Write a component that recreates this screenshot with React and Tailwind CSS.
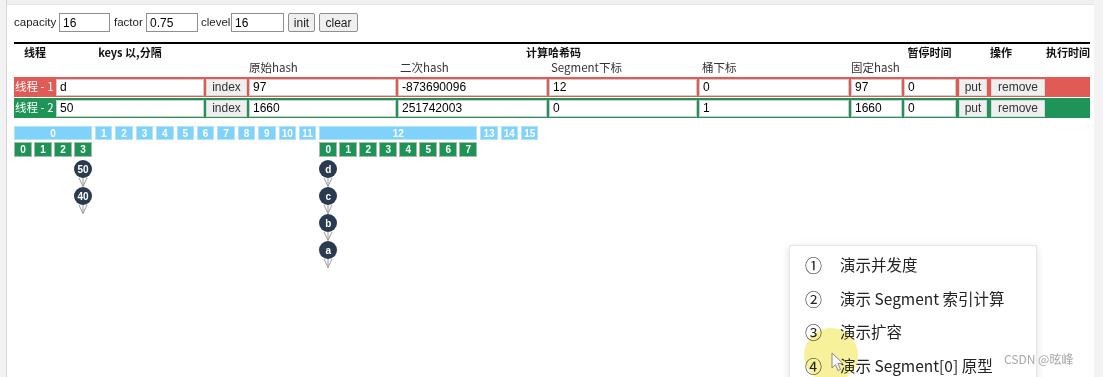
import React from "react";

const ui = { fontFamily: '"Liberation Sans", "Noto Sans CJK SC", sans-serif' };
const cjk = { fontFamily: '"Noto Sans CJK SC", "Liberation Sans", sans-serif' };

const rows = [
  { name: "线程 - 1", bg: "bg-[#e05b56]", keys: "d", h1: "97", h2: "-873690096", seg: "12", bucket: "0", fixed: "97", pause: "0" },
  { name: "线程 - 2", bg: "bg-[#1f9458]", keys: "50", h1: "1660", h2: "251742003", seg: "0", bucket: "1", fixed: "1660", pause: "0" },
];

// segment index -> bucket count and chains hanging under buckets
const segments = [
  { id: 0, buckets: 4, chains: { 3: ["50", "40"] } },
  ...Array.from({ length: 11 }, (_, i) => ({ id: i + 1, buckets: 0 })),
  { id: 12, buckets: 8, chains: { 0: ["d", "c", "b", "a"] } },
  { id: 13, buckets: 0 },
  { id: 14, buckets: 0 },
  { id: 15, buckets: 0 },
];

const Cell = ({ w, value, className = "" }) => (
  <input
    readOnly
    value={value}
    className={`h-[17px] bg-white border border-black/20 px-[3px] text-[12px] text-black outline-none ${className}`}
    style={{ width: w }}
  />
);

const Btn = ({ children, className = "" }) => (
  <button className={`h-[17px] bg-[#efefef] border border-black/10 text-[12px] text-[#333] leading-none ${className}`}>
    {children}
  </button>
);

const Arrow = () => (
  <svg width="10" height="9" viewBox="0 0 10 9" className="block">
    <path d="M1 0 L5 8.5 L9 0 M5 0 L5 8.5" fill="none" stroke="#9a9a9a" strokeWidth="1" />
  </svg>
);

const Chain = ({ items }) => (
  <div className="flex flex-col items-center mt-[3.5px]">
    {items.map((k) => (
      <React.Fragment key={k}>
        <div className="w-[18px] h-[18px] rounded-full bg-[#2b3b4f] text-white text-[10px] font-bold flex items-center justify-center">
          {k}
        </div>
        <Arrow />
      </React.Fragment>
    ))}
  </div>
);

const Diagram = () => (
  <div className="flex items-start gap-[3px] mt-[8px]">
    {segments.map((s) => (
      <div key={s.id} className="flex flex-col">
        <div
          className="h-[14px] bg-[#7fd2fa] border border-[#b7e2f5] text-white text-[10px] font-bold flex items-center justify-center"
          style={{ width: s.buckets ? s.buckets * 20 - 2 : 17.4 }}
        >
          {s.id}
        </div>
        {s.buckets > 0 && (
          <div className="flex items-start gap-[2px] mt-[1.5px]">
            {Array.from({ length: s.buckets }, (_, b) => (
              <div key={b} className="flex flex-col items-center">
                <div className="w-[18px] h-[15px] bg-[#1e9356] border border-[#a9b8ae] text-white text-[10px] font-bold flex items-center justify-center">
                  {b}
                </div>
                {s.chains && s.chains[b] && <Chain items={s.chains[b]} />}
              </div>
            ))}
          </div>
        )}
      </div>
    ))}
  </div>
);

const Menu = () => (
  <div className="absolute left-[789px] top-[245px] w-[248px] h-[140px] bg-white border border-[#e6e6e6] shadow-[0_2px_8px_rgba(0,0,0,0.12)] pt-[2px] text-[15.5px] text-[#222]" style={cjk}>
    {[
      ["①", "演示并发度"],
      ["②", "演示 Segment 索引计算"],
      ["③", "演示扩容"],
      ["④", "演示 Segment[0] 原型"],
    ].map(([n, t]) => (
      <div key={n} className="h-[33.5px] flex items-center pl-[15px] leading-none">
        <span className="w-[35px] text-[17px]">{n}</span>
        <span>{t}</span>
      </div>
    ))}
  </div>
);

export default function App() {
  return (
    <div className="w-[1103px] h-[377px] overflow-hidden flex relative bg-white" style={ui}>
      <div className="w-[7px] bg-[#f2f2f2] border-r border-[#d6d6d6]" />
      <div className="flex-1 flex flex-col">
        <div className="h-[5px] bg-[#f0f0f0] border-b border-[#e4e4e4]" />
        <div className="flex-1 pl-[7px] pr-[3px] pt-[8px]">
          {/* controls */}
          <div className="flex items-center h-[19px] text-[11.5px] text-[#222]">
            <span className="w-[45px]">capacity</span>
            <input readOnly value="16" className="w-[51px] h-[19px] border border-[#8f8f8f] px-[3px] text-[12px] text-black outline-none" />
            <span className="w-[32px] ml-[4px]">factor</span>
            <input readOnly value="0.75" className="w-[52px] h-[19px] border border-[#8f8f8f] px-[3px] text-[12px] text-black outline-none" />
            <span className="w-[30px] ml-[3px]">clevel</span>
            <input readOnly value="16" className="w-[53px] h-[19px] border border-[#8f8f8f] px-[3px] text-[12px] text-black outline-none" />
            <button className="ml-[4px] w-[27px] h-[19px] bg-[#efefef] border border-[#8f8f8f] rounded-[2px] text-[12px] text-[#222]">init</button>
            <button className="ml-[4px] w-[39px] h-[19px] bg-[#efefef] border border-[#8f8f8f] rounded-[2px] text-[12px] text-[#222]">clear</button>
          </div>

          {/* table */}
          <div className="mt-[10px] border-t-2 border-black w-[1076px]">
            <div className="flex h-[16px] items-center text-[11px] font-bold text-[#111] whitespace-nowrap" style={cjk}>
              <div className="w-[42px] text-center">线程</div>
              <div className="w-[148px] text-center">keys 以,分隔</div>
              <div className="w-[700px] text-center">计算哈希码</div>
              <div className="w-[53px] text-center">暂停时间</div>
              <div className="w-[90px] text-center">操作</div>
              <div className="flex-1 text-center">执行时间</div>
            </div>
            <div className="flex h-[16px] items-center text-[11.5px] text-[#333] whitespace-nowrap" style={cjk}>
              <div className="w-[235px]" />
              <div className="w-[151px]">原始hash</div>
              <div className="w-[151px]">二次hash</div>
              <div className="w-[151px]">Segment下标</div>
              <div className="w-[149px]">桶下标</div>
              <div>固定hash</div>
            </div>
            {rows.map((r) => (
              <div key={r.name} className={`flex items-center h-[20px] mt-[1px] ${r.bg}`}>
                <div className="w-[42px] text-[11.5px] text-white pl-[1px] whitespace-nowrap" style={cjk}>{r.name}</div>
                <Cell w={148} value={r.keys} />
                <Btn className="w-[41px] ml-[2px]">index</Btn>
                <Cell w={147} value={r.h1} className="ml-[2px]" />
                <Cell w={149} value={r.h2} className="ml-[2px]" />
                <Cell w={148} value={r.seg} className="ml-[2px]" />
                <Cell w={150} value={r.bucket} className="ml-[2px]" />
                <Cell w={51} value={r.fixed} className="ml-[2px]" />
                <Cell w={52} value={r.pause} className="ml-[2px]" />
                <Btn className="w-[28px] ml-[3px]">put</Btn>
                <Btn className="w-[54px] ml-[4px]">remove</Btn>
              </div>
            ))}
          </div>

          <Diagram />
        </div>
      </div>
      <div className="w-[9px] bg-[#f3f3f3]" />

      <Menu />

      {/* cursor highlight */}
      <div className="absolute left-[804px] top-[328px] w-[54px] h-[54px] rounded-full bg-[#f6f19a] mix-blend-multiply" />
      <svg className="absolute left-[831px] top-[352px]" width="13" height="20" viewBox="0 0 13 20">
        <path d="M1 1 L1 16 L4.5 12.5 L7 18.5 L9.5 17.5 L7 11.5 L12 11.5 Z" fill="#f7f7f7" stroke="#8a8a8a" strokeWidth="1" />
      </svg>

      <div className="absolute left-[1004px] top-[350px] text-[12px] text-[#a8a8a8]" style={cjk}>CSDN @昡峰</div>
    </div>
  );
}
